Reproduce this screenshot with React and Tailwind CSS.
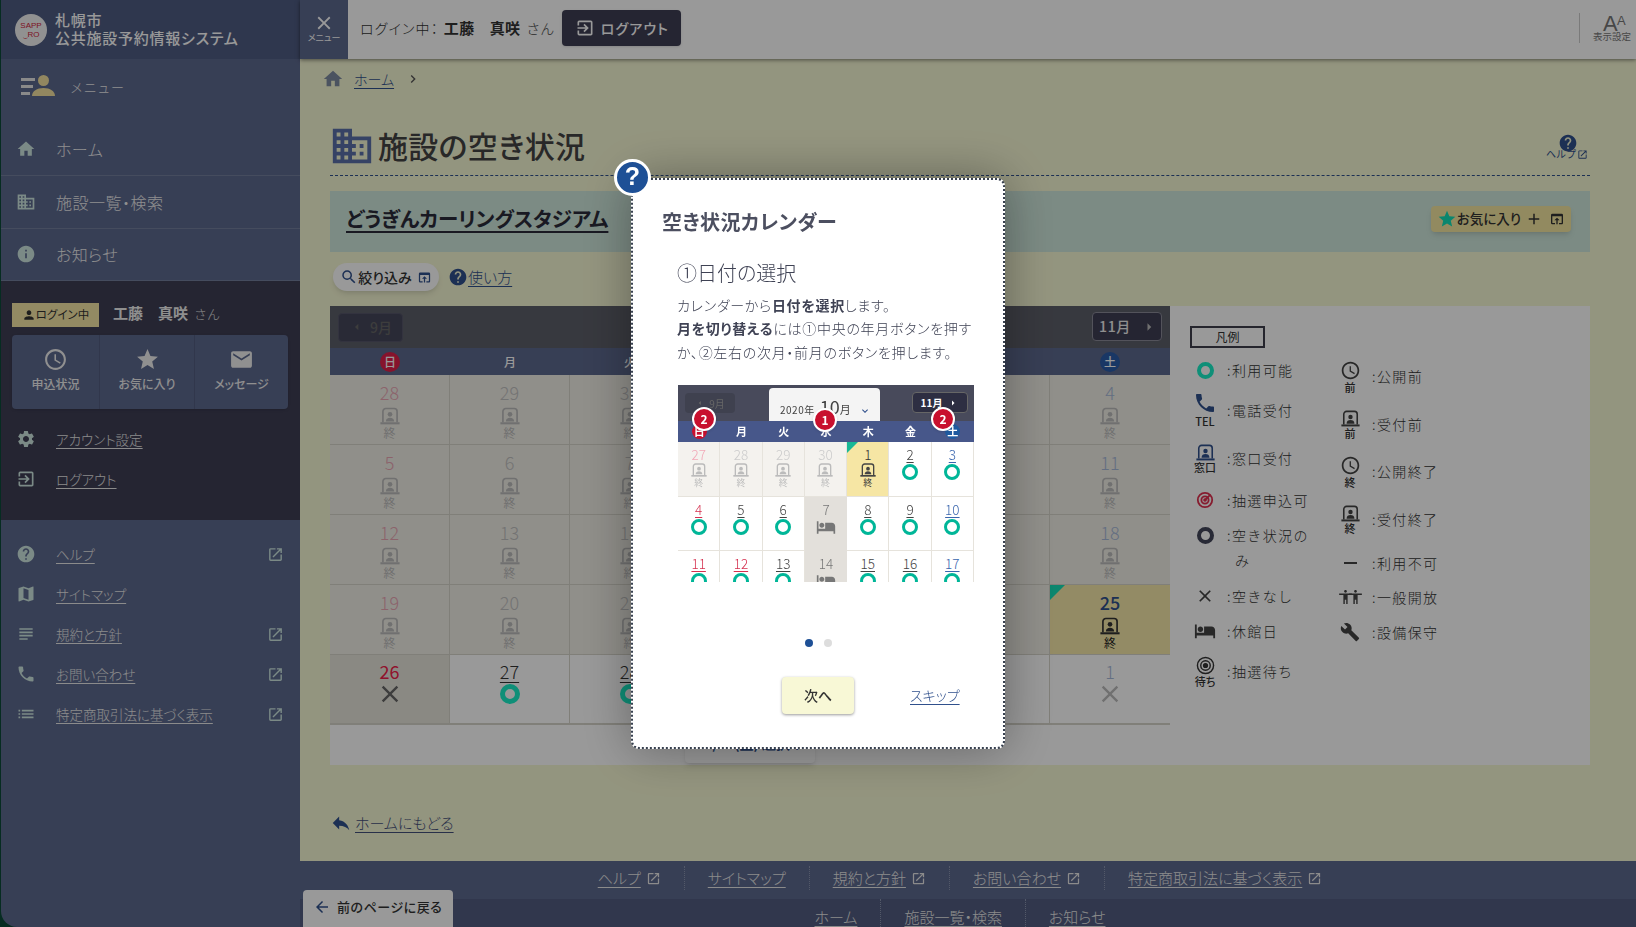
import {
  MdHome, MdDomain, MdInfo, MdSettings, MdExitToApp, MdHelp, MdMap, MdSubject, MdPhone, MdList,
  MdOpenInNew, MdAccessTime, MdStar, MdEmail, MdPerson, MdSearch, MdClose, MdOpenInBrowser,
  MdReply, MdArrowBack, MdHotel, MdBuild, MdAdd, MdExpandMore, MdArrowRight, MdArrowLeft,
  MdKeyboardArrowRight, MdAccessibility,
} from "react-icons/md";

const palt = "[font-feature-settings:'palt']";

function WindowIcon({ className }) {
  return (
    <svg viewBox="0 0 24 21" className={className} fill="currentColor">
      <path d="M3.500 18V5a3.500 3.500 0 0 1 3.500-3.500h10a3.500 3.500 0 0 1 3.500 3.500v13" fill="none" stroke="currentColor" strokeWidth="2" />
      <circle cx="12" cy="8.500" r="2.800" />
      <path d="M7 17c0-3.200 2.200-4.500 5-4.500s5 1.300 5 4.500z" />
      <rect x="0.500" y="18" width="23" height="2.500" />
    </svg>
  );
}

function Ring({ className }) {
  return <span className={`block rounded-full ${className}`} />;
}

function Logo() {
  return (
    <div className="w-[32px] h-[32px] rounded-full bg-[#f2f2f2] flex flex-col items-center justify-center text-[#d01c3a] text-[8px] leading-[9px] font-medium font-['Liberation_Sans',sans-serif]">
      <span>SAPP</span>
      <span>‿RO</span>
    </div>
  );
}

function MenuPersonIcon() {
  return (
    <svg viewBox="0 0 36 24" className="w-[36px] h-[24px]">
      <rect x="1" y="4" width="14" height="3" fill="#e6e6e6" />
      <rect x="1" y="11" width="12" height="3" fill="#e6e6e6" />
      <rect x="1" y="18" width="9" height="3" fill="#e6e6e6" />
      <circle cx="23.500" cy="6.500" r="5.500" fill="#f3e1a0" />
      <path d="M12 22c0-5 5-8 11.500-8S35 17 35 22z" fill="#f3e1a0" />
    </svg>
  );
}

function SideLink({ icon: Icon, label, ext }) {
  return (
    <div className="flex items-center h-[40px] pl-[15px] pr-[17px]">
      <Icon className="w-[20px] h-[20px] text-[#cde6e0] shrink-0" />
      <span className={`ml-[20px] text-[13.500px] font-light text-[#e8e8e8] underline underline-offset-[3px] ${palt}`}>{label}</span>
      {ext && <MdOpenInNew className="ml-auto w-[17px] h-[17px] text-[#cde6e0]" />}
    </div>
  );
}

function Sidebar() {
  const nav = [
    [MdHome, "ホーム", "h-[52px]"],
    [MdDomain, "施設一覧・検索", "h-[53px]"],
    [MdInfo, "お知らせ", "h-[52px]"],
  ];
  const shortcuts = [
    [MdAccessTime, "申込状況", "w-[88px]"],
    [MdStar, "お気に入り", "w-[95px]"],
    [MdEmail, "メッセージ", "flex-1"],
  ];
  return (
    <aside className="w-[300px] h-full shrink-0 ml-px -mr-px flex flex-col bg-[#5d698e] rounded-bl-2xl overflow-hidden">
      <div className="h-[59px] bg-[#4f5c82] flex items-center pl-[14px] shrink-0">
        <Logo />
        <div className={`ml-[8px] -mt-[2px] text-white text-[15px] leading-[18px] font-medium tracking-[0.05em] ${palt}`}>
          札幌市<br />公共施設予約情報システム
        </div>
      </div>
      <div className="h-[65px] flex items-start pt-[15px] pl-[19px] shrink-0">
        <MenuPersonIcon />
        <span className="ml-[14px] mt-[3px] text-[13px] font-light tracking-[0.05em] text-[#eee]">メニュー</span>
      </div>
      {nav.map(([Icon, label, h]) => (
        <div key={label} className={`${h} flex items-center pl-[15px] pb-px border-b border-[#747f9d] shrink-0`}>
          <Icon className="w-[20px] h-[20px] text-[#cde6e0]" />
          <span className={`ml-[20px] text-[16px] font-light tracking-[0.03em] text-[#eee] ${palt}`}>{label}</span>
        </div>
      ))}
      <div className="h-[239px] bg-[#3e3e54] shrink-0 px-[11px] pt-[22px]">
        <div className="flex items-center h-[24px]">
          <div className="w-[87px] h-[24px] bg-[#f5e6a5] flex items-center justify-center text-[#333] text-[11.500px]">
            <MdPerson className="w-[14px] h-[14px]" />
            <span className={palt}>ログイン中</span>
          </div>
          <span className="ml-[14px] -mt-[3px] text-[15px] font-bold text-[#eee]">工藤　真咲</span>
          <span className="ml-[6px] -mt-[3px] text-[13px] font-light text-[#ddd]">さん</span>
        </div>
        <div className="mt-[8px] h-[74px] w-[276px] rounded bg-[#5d698e] flex shadow">
          {shortcuts.map(([Icon, label, w]) => (
            <div key={label} className={`${w} flex flex-col items-center justify-center pb-[5px] border-r border-[#525d7f] last:border-r-0`}>
              <Icon className="w-[25px] h-[25px] text-[#f0f0f0]" />
              <span className={`mt-[3px] text-[12px] font-medium text-[#eee] ${palt}`}>{label}</span>
            </div>
          ))}
        </div>
        <div className="-mx-[11px] mt-[10px]">
          <SideLink icon={MdSettings} label="アカウント設定" />
          <SideLink icon={MdExitToApp} label="ログアウト" />
        </div>
      </div>
      <div className="pt-[14px]">
        <SideLink icon={MdHelp} label="ヘルプ" ext />
        <SideLink icon={MdMap} label="サイトマップ" />
        <SideLink icon={MdSubject} label="規約と方針" ext />
        <SideLink icon={MdPhone} label="お問い合わせ" ext />
        <SideLink icon={MdList} label="特定商取引法に基づく表示" ext />
      </div>
    </aside>
  );
}

function TopBar() {
  return (
    <header className="h-[59px] shrink-0 bg-white flex items-center pb-[3px] shadow-[0_1px_4px_rgba(0,0,0,0.5)] relative z-10">
      <div className="w-[48px] h-[59px] self-start bg-[#5d698e] flex flex-col items-center justify-center text-white">
        <MdClose className="w-[22px] h-[22px] -mt-[4px]" />
        <span className={`text-[9px] leading-[10px] -mt-[1px] ${palt}`}>メニュー</span>
      </div>
      <span className={`ml-[12px] text-[14px] font-light text-[#333] tracking-[0.08em] ${palt}`}>ログイン中：</span>
      <span className="ml-[5px] text-[15px] font-bold text-[#333] tracking-[0.02em]">工藤　真咲</span>
      <span className="ml-[6px] text-[14px] font-light text-[#444]">さん</span>
      <button className="ml-[8px] w-[119px] h-[36px] rounded bg-[#3e3e54] flex items-center justify-center text-white shadow">
        <MdExitToApp className="w-[20px] h-[20px]" />
        <span className={`ml-[6px] text-[14px] font-medium tracking-[0.08em] ${palt}`}>ログアウト</span>
      </button>
      <div className="ml-auto w-[57px] h-[30px] border-l border-[#ccc] relative text-[#777]">
        <span className="absolute left-[23px] top-[0px] text-[22px] leading-[22px] font-['Liberation_Sans',sans-serif]">A</span>
        <span className="absolute left-[37px] top-[1px] text-[13px] leading-[14px] font-['Liberation_Sans',sans-serif]">A</span>
        <span className="absolute left-[13px] top-[17px] text-[9.500px] leading-[12px] whitespace-nowrap">表示設定</span>
      </div>
    </header>
  );
}

const firstWeeks = [
  [28, 29, 30, 1, 2, 3, 4],
  [5, 6, 7, 8, 9, 10, 11],
  [12, 13, 14, 15, 16, 17, 18],
  [19, 20, 21, 22, 23, 24, 25],
];
const lastWeek = [26, 27, 28, 29, 30, 31, 1];

function CalCell({ n, col, row }) {
  const today = n === 25;
  const edge = col === 6 ? "" : "border-r";
  if (row < 4) {
    const tone = col === 0 ? "text-[#e9a5b3]" : col === 6 ? "text-[#a6b8d8]" : "text-[#c0c0c0]";
    return (
      <div className={`relative flex flex-col items-center ${edge} border-b border-[#d6d4ca] ${today ? "bg-[#f6e8a8]" : "bg-[#f0eee6]"}`}>
        {today && <span className="absolute left-0 top-0 w-0 h-0 border-t-[15px] border-r-[15px] border-t-[#14e0b8] border-r-transparent" />}
        <span className={`mt-[5px] text-[18px] leading-[24px] ${today ? "text-[#30508c] font-medium" : `font-light ${tone}`}`}>{n}</span>
        <WindowIcon className={`w-[20px] h-[18px] mt-[3px] ${today ? "text-[#333]" : "text-[#bbb]"}`} />
        <span className={`mt-[1px] text-[12px] leading-[14px] ${today ? "text-[#222]" : "text-[#bbb]"}`}>終</span>
      </div>
    );
  }
  if (col === 0 || col === 6) {
    return (
      <div className={`flex flex-col items-center ${edge} border-b-2 border-[#d6d4ca] ${col === 0 ? "bg-[#e6e4da]" : "bg-white"}`}>
        <span className={`mt-[4px] text-[18px] leading-[24px] ${col === 0 ? "text-[#f0204a]" : "text-[#a6b8d8] font-light"}`}>{n}</span>
        <MdClose className={`w-[28px] h-[28px] -mt-[3px] ${col === 0 ? "text-[#666]" : "text-[#bbb]"}`} />
      </div>
    );
  }
  return (
    <div className={`flex flex-col items-center ${edge} border-b-2 border-[#d6d4ca] bg-white`}>
      <span className="mt-[4px] text-[18px] leading-[24px] font-light text-[#333] underline underline-offset-[3px]">{n}</span>
      <Ring className="w-[20px] h-[20px] border-[5px] border-[#19efc8] mt-[1px]" />
    </div>
  );
}

function DayHead({ label, col }) {
  if (col === 0) {
    return <span className="w-[20px] h-[20px] rounded-full bg-[#e0204a] flex items-center justify-center text-[12px] text-white font-medium">{label}</span>;
  }
  if (col === 6) {
    return <span className="w-[20px] h-[20px] rounded-full bg-[#2a5ca8] flex items-center justify-center text-[12px] text-white font-medium">{label}</span>;
  }
  return <span className="text-[12px] text-white font-medium">{label}</span>;
}

const weekDays = ["日", "月", "火", "水", "木", "金", "土"];

function Calendar() {
  return (
    <div className="w-[840px] shrink-0">
      <div className="h-[42px] bg-[#5d5f69] flex items-center justify-between px-[8px]">
        <div className="w-[65px] h-[29px] rounded border border-[#55566a] bg-[#45465a] flex items-center justify-center text-[#666] text-[14px] font-medium">
          <MdArrowLeft className="w-[16px] h-[16px] mr-[5px]" />9月
        </div>
        <div className="w-[70px] h-[29px] -mt-px rounded border border-[#8a8b98] bg-[#3e3e54] flex items-center justify-center text-[#eee] text-[14px] font-medium tracking-[0.05em] pl-[3px]">
          11月<MdArrowRight className="w-[18px] h-[18px] ml-[9px] text-[#bbb]" />
        </div>
      </div>
      <div className="h-[27px] bg-[#5d698e] grid grid-cols-7">
        {weekDays.map((d, i) => (
          <div key={d} className="flex items-center justify-center">
            <DayHead label={d} col={i} />
          </div>
        ))}
      </div>
      <div className="grid grid-cols-7 auto-rows-[70px]">
        {firstWeeks.map((week, r) => week.map((n, c) => <CalCell key={`${r}-${c}`} n={n} col={c} row={r} />))}
        {lastWeek.map((n, c) => <CalCell key={`4-${c}`} n={n} col={c} row={4} />)}
      </div>
      <div className="flex justify-center mt-[4px]">
        <button className={`w-[130px] h-[34px] bg-white rounded-sm shadow-md pb-[6px] text-[14px] font-bold text-[#30508c] ${palt}`}>10/25(土) 選択↑</button>
      </div>
    </div>
  );
}

function LegendRow({ icon, text, h }) {
  return (
    <div className={`flex items-center ${h}`}>
      <div className="w-[32px] flex flex-col items-center shrink-0 text-[#444]">{icon}</div>
      <div className="ml-[6px] text-[14px] font-light leading-[25px] text-[#333] tracking-[0.1em] whitespace-nowrap">{text}</div>
    </div>
  );
}

function Sub({ children }) {
  return <span className={`text-[11px] leading-[12px] font-medium text-[#333] whitespace-nowrap ${palt}`}>{children}</span>;
}

function Legend() {
  const left = [
    [<Ring className="w-[17px] h-[17px] border-[4px] border-[#19efc8]" />, ":利用可能", "h-[36px]"],
    [<><MdPhone className="w-[24px] h-[24px] -mt-[3px] text-[#30508c]" /><Sub>TEL</Sub></>, ":電話受付", "h-[44px]"],
    [<><WindowIcon className="w-[19px] h-[17px] text-[#30508c]" /><Sub>窓口</Sub></>, ":窓口受付", "h-[52px]"],
    [<svg viewBox="0 0 20 20" className="w-[18px] h-[18px]" fill="none" stroke="#e0304f" strokeWidth="2"><circle cx="10" cy="10" r="8" /><circle cx="10" cy="10" r="4" /><circle cx="10" cy="10" r="1" fill="#e0304f" /><path d="M10 10l6-6" /></svg>, ":抽選申込可", "h-[32px]"],
    [<Ring className="w-[17px] h-[17px] border-[4px] border-[#44465a] mb-[25px]" />, <>:空き状況の<span className="block pl-[8px]">み</span></>, "h-[63px]"],
    [<MdClose className="w-[20px] h-[20px]" />, ":空きなし", "h-[34px]"],
    [<MdHotel className="w-[22px] h-[22px]" />, ":休館日", "h-[36px]"],
    [<><svg viewBox="0 0 20 20" className="w-[19px] h-[19px]" fill="none" stroke="#333" strokeWidth="1.500"><circle cx="10" cy="10" r="8.500" /><circle cx="10" cy="10" r="5" /><circle cx="10" cy="10" r="2" fill="#333" /></svg><Sub>待ち</Sub></>, ":抽選待ち", "h-[44px]"],
  ];
  const right = [
    [<><MdAccessTime className="w-[21px] h-[21px]" /><Sub>前</Sub></>, ":公開前", "h-[48px]"],
    [<><WindowIcon className="w-[19px] h-[17px]" /><Sub>前</Sub></>, ":受付前", "h-[48px]"],
    [<><MdAccessTime className="w-[21px] h-[21px]" /><Sub>終</Sub></>, ":公開終了", "h-[47px]"],
    [<><WindowIcon className="w-[19px] h-[17px]" /><Sub>終</Sub></>, ":受付終了", "h-[48px]"],
    [<span className="block w-[13px] h-[1.500px] bg-[#444]" />, ":利用不可", "h-[40px]"],
    [<span className="flex -space-x-[7px]"><MdAccessibility className="w-[17px] h-[20px]" /><MdAccessibility className="w-[17px] h-[20px]" /></span>, ":一般開放", "h-[28px]"],
    [<MdBuild className="w-[20px] h-[20px]" />, ":設備保守", "h-[42px]"],
  ];
  return (
    <div className="flex-1 pl-[20px] pt-[20px]">
      <div className="w-[75px] h-[22px] border-2 border-[#3e3e4c] flex items-center justify-center text-[12px] text-[#333]">凡例</div>
      <div className="flex mt-[4px]">
        <div className="w-[145px] -ml-px shrink-0">
          {left.map(([icon, text, h], i) => <LegendRow key={i} icon={icon} text={text} h={h} />)}
        </div>
        <div>
          {right.map(([icon, text, h], i) => <LegendRow key={i} icon={icon} text={text} h={h} />)}
        </div>
      </div>
    </div>
  );
}

function Content() {
  return (
    <main className="h-[802px] shrink-0 bg-[#f6f8d4] pl-[30px] pr-[46px]">
      <div className="h-[40px] flex items-center text-[#30508c]">
        <MdHome className="w-[22px] h-[22px] -ml-[8px] text-[#7d8ba0]" />
        <span className={`ml-[10px] text-[14px] font-light underline underline-offset-[3px] ${palt}`}>ホーム</span>
        <MdKeyboardArrowRight className="ml-[11px] w-[16px] h-[16px] text-[#555]" />
      </div>
      <div className="h-[77px] flex justify-between border-b border-dashed border-[#30508c]">
        <div className="flex items-center pb-[2px] mt-[19px]">
          <MdDomain className="w-[46px] h-[46px] -ml-[1px] text-[#5a71a8]" />
          <span className={`ml-[3px] text-[30px] tracking-[0.01em] font-medium text-[#444] ${palt}`}>施設の空き状況</span>
        </div>
        <div className="relative w-[48px] h-full text-[#30508c] -mr-[4px]">
          <MdHelp className="absolute left-[12px] top-[34px] w-[20px] h-[20px]" />
          <span className="absolute left-0 top-[49px] text-[10px] leading-[12px] whitespace-nowrap">ヘルプ</span>
          <MdOpenInNew className="absolute left-[31px] top-[50px] w-[11px] h-[11px]" />
        </div>
      </div>
      <div className="mt-[15px] h-[61px] bg-[#cfe8dc] flex items-center justify-between pl-[16px] pr-[19px] pb-[6px]">
        <span className={`text-[20.500px] font-bold text-[#2b2b3a] underline underline-offset-[4px] ${palt}`}>どうぎんカーリングスタジアム</span>
        <button className="w-[140px] h-[26px] rounded bg-[#f4e6a0] shadow-md flex items-center justify-center text-[#333]">
          <MdStar className="w-[20px] h-[20px] text-[#11dfb8]" />
          <span className={`text-[13.500px] font-medium ${palt}`}>お気に入り</span>
          <MdAdd className="w-[18px] h-[18px] ml-[4px]" />
          <MdOpenInBrowser className="w-[16px] h-[16px] ml-[6px]" />
        </button>
      </div>
      <div className="mt-[11px] h-[28px] flex items-center">
        <button className="ml-[3px] w-[106px] h-[28px] rounded-full bg-white shadow-md flex items-center justify-center text-[#333]">
          <MdSearch className="w-[18px] h-[18px] text-[#30508c]" />
          <span className={`text-[14px] font-medium ${palt}`}>絞り込み</span>
          <MdOpenInBrowser className="w-[15px] h-[15px] ml-[5px] text-[#30508c]" />
        </button>
        <MdHelp className="ml-[9px] w-[20px] h-[20px] text-[#30508c]" />
        <span className={`text-[15px] font-light text-[#30508c] underline underline-offset-[3px] pt-px ${palt}`}>使い方</span>
      </div>
      <div className="mt-[15px] h-[459px] bg-white flex">
        <Calendar />
        <Legend />
      </div>
      <div className="mt-[46px] h-[24px] flex items-center text-[#30508c]">
        <MdReply className="w-[22px] h-[22px]" />
        <span className={`ml-[3px] text-[15px] font-light text-[#44507a] underline underline-offset-[3px] ${palt}`}>ホームにもどる</span>
      </div>
    </main>
  );
}

function Footer() {
  const top = [["ヘルプ", true], ["サイトマップ", false], ["規約と方針", true], ["お問い合わせ", true], ["特定商取引法に基づく表示", true]];
  const bottom = ["ホーム", "施設一覧・検索", "お知らせ"];
  return (
    <footer className="shrink-0 pr-[16px] bg-[#5d698e] text-[#e8e8e8] relative">
      <div className="h-[38px] flex items-center justify-center pb-[4px]">
        {top.map(([label, ext]) => (
          <div key={label} className="flex items-center px-[23px] h-[24px] border-l border-dotted border-[#8a94b0] first:border-l-0">
            <span className={`text-[15px] font-light underline underline-offset-[3px] ${palt}`}>{label}</span>
            {ext && <MdOpenInNew className="ml-[5px] w-[15px] h-[15px]" />}
          </div>
        ))}
      </div>
      <div className="h-[38px] -mr-[16px] pr-[16px] bg-[#525d80] flex items-start justify-center">
        {bottom.map((label) => (
          <div key={label} className="flex items-center px-[23px] h-[28px] pt-[9px] border-l border-dotted border-[#8a94b0] first:border-l-0">
            <span className={`text-[15px] font-light underline underline-offset-[3px] ${palt}`}>{label}</span>
          </div>
        ))}
      </div>
      <button className="absolute left-[3px] top-[29px] w-[150px] h-[37px] bg-white rounded-t flex items-center pl-[10px] pb-[3px] text-[#333]">
        <MdArrowBack className="w-[18px] h-[18px] text-[#30508c]" />
        <span className={`ml-[6px] text-[13px] font-medium tracking-[0.04em] ${palt}`}>前のページに戻る</span>
      </button>
    </footer>
  );
}

const miniWeeks = [
  [[27, "past"], [28, "past"], [29, "past"], [30, "past"], [1, "today"], [2, "ok"], [3, "ok"]],
  [[4, "ok"], [5, "ok"], [6, "ok"], [7, "off"], [8, "ok"], [9, "ok"], [10, "ok"]],
  [[11, "ok"], [12, "hol"], [13, "ok"], [14, "off"], [15, "ok"], [16, "ok"], [17, "ok"]],
];

function MiniCell({ n, kind, col }) {
  let tone = "text-[#444]";
  if (col === 0 || kind === "hol") tone = "text-[#d5304f]";
  if (col === 6) tone = "text-[#3a66ae]";
  if (kind === "past") {
    return (
      <div className="bg-[#f4f2ee] flex flex-col items-center border-r border-b border-[#e6e3dc]">
        <span className={`mt-[4px] text-[13.500px] font-light leading-[16px] ${col === 0 ? "text-[#f2a9b8]" : "text-[#ccc]"}`}>{n}</span>
        <WindowIcon className="w-[16px] h-[14px] mt-[1px] text-[#bbb]" />
        <span className="text-[9px] leading-[11px] text-[#bbb]">終</span>
      </div>
    );
  }
  if (kind === "today") {
    return (
      <div className="relative bg-[#f6e6a4] flex flex-col items-center border-r border-b border-[#e6e3dc]">
        <span className="absolute left-0 top-0 w-0 h-0 border-t-[11px] border-r-[11px] border-t-[#19b896] border-r-transparent" />
        <span className="mt-[4px] text-[13.500px] font-light leading-[16px] text-[#333]">{n}</span>
        <WindowIcon className="w-[16px] h-[14px] mt-[1px] text-[#444]" />
        <span className="text-[9px] leading-[11px] text-[#333]">終</span>
      </div>
    );
  }
  if (kind === "off") {
    return (
      <div className="bg-[#e3e0db] flex flex-col items-center">
        <span className="mt-[4px] text-[13.500px] font-light leading-[16px] text-[#777]">{n}</span>
        <MdHotel className="w-[20px] h-[20px] text-[#777]" />
      </div>
    );
  }
  return (
    <div className="bg-white flex flex-col items-center border-r border-b border-[#e6e3dc]">
      <span className={`mt-[4px] text-[13.500px] font-light leading-[16px] underline underline-offset-2 ${tone}`}>{n}</span>
      <Ring className="w-[16px] h-[16px] border-[3.500px] border-[#00b698] mt-[2px]" />
    </div>
  );
}

function NumBadge({ n, className }) {
  return (
    <span className={`absolute w-[24px] h-[24px] rounded-full bg-[#c8102e] border-2 border-white shadow flex items-center justify-center text-white text-[12px] font-bold ${className}`}>{n}</span>
  );
}

function MiniCalendar() {
  return (
    <div className="relative w-[296px] h-[197px] overflow-hidden blur-[0.3px]">
      <div className="h-[36px] bg-[#484a5b] relative">
        <div className="absolute left-[7px] top-[8px] w-[50px] h-[20px] rounded-sm bg-[#3f414f] flex items-center justify-center text-[#666] text-[10px]">
          <MdArrowLeft className="w-[10px] h-[10px] mr-[4px]" />9月
        </div>
        <div className="absolute left-[91px] top-[3px] w-[111px] h-[33px] rounded-t-sm bg-[#f4f4f4] flex items-end pb-[4px] pl-[11px] text-[#444]">
          <span className="text-[10px] leading-[14px] tracking-wider">2020年</span>
          <span className="ml-[5px] text-[18px] leading-[22px]">10</span>
          <span className="text-[11px] leading-[16px]">月</span>
          <MdExpandMore className="ml-[8px] w-[12px] h-[12px] text-[#30508c]" />
        </div>
        <div className="absolute left-[234px] top-[7px] w-[56px] h-[21px] rounded-sm border border-[#666] bg-[#2d2e42] flex items-center justify-center text-white text-[10px] font-bold">
          11月<MdArrowRight className="ml-[5px] w-[12px] h-[12px]" />
        </div>
      </div>
      <div className="h-[21px] bg-[#47578a] grid grid-cols-7 text-white text-[11px] font-bold">
        {weekDays.map((d, i) => (
          <div key={d} className="flex items-center justify-center">
            {i === 0 && <span className="w-[15px] h-[15px] rounded-full bg-[#c8102e] flex items-center justify-center">{d}</span>}
            {i === 6 && <span className="w-[15px] h-[15px] rounded-full bg-[#1e5aa0] flex items-center justify-center">{d}</span>}
            {i > 0 && i < 6 && d}
          </div>
        ))}
      </div>
      <div className="grid grid-cols-7 auto-rows-[54.500px]">
        {miniWeeks.map((week, r) => week.map(([n, kind], c) => <MiniCell key={`${r}-${c}`} n={n} kind={kind} col={c} />))}
      </div>
      <NumBadge n="2" className="left-[14px] top-[22px]" />
      <NumBadge n="1" className="left-[135px] top-[23px]" />
      <NumBadge n="2" className="left-[253px] top-[22px]" />
    </div>
  );
}

function Modal() {
  return (
    <div className="fixed inset-0 bg-black/40 flex items-center justify-center z-20">
      <div className="relative -mt-px w-[374px] h-[571px] bg-white rounded-lg border-2 border-dotted border-[#37404f] shadow-[0_0_50px_rgba(0,0,0,0.35)] pl-[29px] pt-[27px]">
        <span className="absolute -left-[19px] -top-[21px] w-[37px] h-[37px] rounded-full bg-[#1e5096] border-[3px] border-white flex items-center justify-center text-white text-[25px] font-bold font-['Liberation_Sans',sans-serif]">?</span>
        <h2 className={`text-[20px] font-bold leading-[30px] tracking-[0.02em] text-[#4c4f60] ${palt}`}>空き状況カレンダー</h2>
        <div className="pl-[15px]">
          <h3 className={`mt-[21px] text-[20px] leading-[30px] text-[#3f4254] font-light ${palt}`}>①日付の選択</h3>
          <p className={`mt-[6px] w-[296px] text-[14px] font-light leading-[23.500px] text-[#3f4254] tracking-[0.05em] ${palt}`}>
            カレンダーから<b className="font-bold">日付を選択</b>します。<br />
            <b className="font-bold">月を切り替える</b>には①中央の年月ボタンを押すか、②左右の次月・前月のボタンを押します。
          </p>
          <div className="mt-[21px] ml-px">
            <MiniCalendar />
          </div>
        </div>
        <div className="flex justify-center gap-[11px] mt-[57px] -ml-[29px]">
          <span className="w-[8px] h-[8px] rounded-full bg-[#1e5096]" />
          <span className="w-[8px] h-[8px] rounded-full bg-[#ddd]" />
        </div>
        <div className="relative mt-[30px] h-[37px] -ml-[29px]">
          <button className="absolute left-[149px] top-0 w-[72px] h-[37px] rounded-sm bg-[#f8f8d6] shadow-[0_1px_3px_rgba(0,0,0,0.4)] text-[14px] font-medium text-[#333]">次へ</button>
          <span className={`absolute left-[277px] top-[8px] text-[14px] font-light text-[#30508c] underline underline-offset-[3px] ${palt}`}>スキップ</span>
        </div>
      </div>
    </div>
  );
}

export default function App() {
  return (
    <div className="h-screen w-full overflow-hidden flex bg-[#0a4a38] font-['Noto_Sans_CJK_JP',sans-serif]">
      <Sidebar />
      <div className="flex-1 h-full flex flex-col min-w-0">
        <TopBar />
        <Content />
        <Footer />
      </div>
      <Modal />
    </div>
  );
}
